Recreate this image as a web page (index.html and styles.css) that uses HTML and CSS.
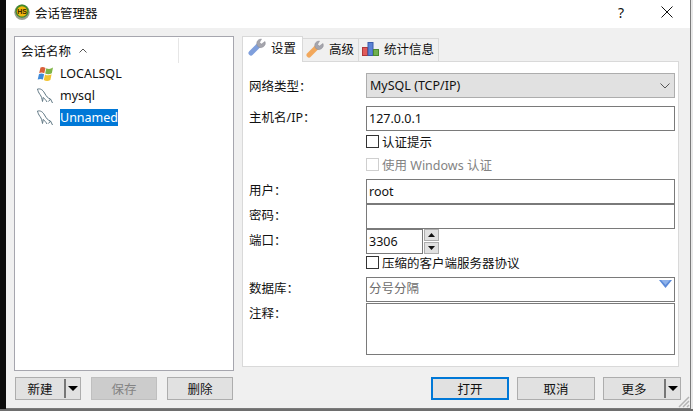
FILE: index.html
```html
<!DOCTYPE html>
<html lang="zh">
<head>
<meta charset="utf-8">
<title>会话管理器</title>
<link rel="stylesheet" href="styles.css">
</head>
<body>
<div class="screen">
  <div class="edge-left"></div>
  <div class="window">
    <header class="titlebar">
      <svg class="logo" width="16" height="16" viewBox="0 0 16 16">
        <circle cx="8" cy="8.200" r="7.700" fill="#9a9f8e"/>
        <circle cx="8" cy="7.200" r="6.600" fill="#3f8a2c"/>
        <circle cx="8" cy="7.400" r="5.200" fill="#f4b70c"/>
        <text x="8" y="10" class="logo-text">HS</text>
      </svg>
      <span class="title">会话管理器</span>
      <span class="help">?</span>
      <svg class="close" width="12" height="12" viewBox="0 0 12 12"><path d="M.5.5l11 11M11.500.5l-11 11" stroke="#111" fill="none"/></svg>
    </header>
    <div class="main">
      <section class="sessions">
        <div class="list">
          <div class="list-head">
            <span class="head-label">会话名称</span>
            <svg class="sort" width="8" height="5" viewBox="0 0 8 5"><path d="M.5 4.500L4 1l3.500 3.500" stroke="#555" fill="none"/></svg>
          </div>
          <div class="item">
            <svg class="item-icon" width="16" height="16" viewBox="0 0 16 16">
              <path d="M3.500 1.500Q6 .5 8.500 2L7.300 7.300Q5 6 2.200 7z" fill="#d9603a"/>
              <path d="M9.300 2.200Q12.500 4 16 1.500L14.800 7.300Q11.500 9.200 8.200 7.500z" fill="#7eb545"/>
              <path d="M2 7.900Q4.800 6.800 7.100 8.200L5.900 13.600Q3.500 12.300 .7 13.600z" fill="#3f8ad8"/>
              <path d="M8 8.400Q11.300 10.200 14.600 8.200L13.400 14Q10 15.900 6.800 14z" fill="#f2c432"/>
            </svg>
            <span class="item-name">LOCALSQL</span>
          </div>
          <div class="item">
            <svg class="item-icon" width="16" height="16" viewBox="0 0 16 16"><path d="M.5 1C3.500.5 5.500 1.500 7.500 5S10.500 10 13.500 11L15.500 15M13.500 11L11.500 13.500M.5 1C1 3 1.500 4.500 3 6.500S4.800 10 5.500 13.500C6 11.500 6 10.500 6 9.500 7.500 10.500 9 12 10 14" stroke="#5f7783" stroke-width="1" fill="none"/></svg>
            <span class="item-name">mysql</span>
          </div>
          <div class="item">
            <svg class="item-icon" width="16" height="16" viewBox="0 0 16 16"><path d="M.5 1C3.500.5 5.500 1.500 7.500 5S10.500 10 13.500 11L15.500 15M13.500 11L11.500 13.500M.5 1C1 3 1.500 4.500 3 6.500S4.800 10 5.500 13.500C6 11.500 6 10.500 6 9.500 7.500 10.500 9 12 10 14" stroke="#5f7783" stroke-width="1" fill="none"/></svg>
            <span class="item-name selected">Unnamed</span>
          </div>
        </div>
      </section>
      <section class="details">
        <nav class="tabs">
          <div class="tab active">
            <svg class="tab-icon" width="18" height="18" viewBox="0 0 18 18"><path d="M3 15L10 8" stroke="#7f9fdc" stroke-width="5" stroke-linecap="round"/><path d="M10.500 9A4.500 4.500 0 0 1 11 1.500L13.500 1 11.500 4.500l2 1.500L17 3.500A4.500 4.500 0 0 1 10.500 9z" fill="#a5a5ad" stroke="#8b8b93" stroke-width=".5"/></svg>
            <span>设置</span>
          </div>
          <div class="tab adv">
            <svg class="tab-icon" width="18" height="18" viewBox="0 0 18 18"><path d="M3 15L10 8" stroke="#f2a85c" stroke-width="5" stroke-linecap="round"/><path d="M10.500 9A4.500 4.500 0 0 1 11 1.500L13.500 1 11.500 4.500l2 1.500L17 3.500A4.500 4.500 0 0 1 10.500 9z" fill="#a5a5ad" stroke="#8b8b93" stroke-width=".5"/></svg>
            <span>高级</span>
          </div>
          <div class="tab stats">
            <svg class="tab-icon" width="17" height="16" viewBox="0 0 17 16"><rect x=".5" y="6.500" width="5" height="8" fill="#e05a5a" stroke="#b03838"/><rect x="6" y="1.500" width="5" height="13" fill="#5b82d6" stroke="#3a5cab"/><rect x="11.500" y="8.500" width="5" height="6" fill="#6fb04f" stroke="#4b8a30"/></svg>
            <span>统计信息</span>
          </div>
        </nav>
        <div class="panel">
          <div class="row row-combo">
            <label class="field-label">网络类型：</label>
            <div class="combo">
              <span>MySQL (TCP/IP)</span>
              <svg width="10" height="6" viewBox="0 0 10 6"><path d="M.5.500L5 5 9.500.500" stroke="#555" fill="none"/></svg>
            </div>
          </div>
          <div class="row row-host">
            <label class="field-label">主机名/IP：</label>
            <div class="input">127.0.0.1</div>
          </div>
          <div class="row row-check1">
            <span class="spacer"></span>
            <span class="box"></span><span class="check-text">认证提示</span>
          </div>
          <div class="row row-check2 disabled">
            <span class="spacer"></span>
            <span class="box"></span><span class="check-text">使用 Windows 认证</span>
          </div>
          <div class="row row-user">
            <label class="field-label">用户：</label>
            <div class="input">root</div>
          </div>
          <div class="row row-pass">
            <label class="field-label">密码：</label>
            <div class="input"></div>
          </div>
          <div class="row row-port">
            <label class="field-label">端口：</label>
            <div class="input port">3306</div>
            <div class="spin">
              <span class="spin-btn"><svg width="7" height="4" viewBox="0 0 7 4"><path d="M3.500 0L7 4H0z" fill="#111"/></svg></span>
              <span class="spin-btn"><svg width="7" height="4" viewBox="0 0 7 4"><path d="M0 0H7L3.500 4z" fill="#111"/></svg></span>
            </div>
          </div>
          <div class="row row-check3">
            <span class="spacer"></span>
            <span class="box"></span><span class="check-text">压缩的客户端服务器协议</span>
          </div>
          <div class="row row-db">
            <label class="field-label">数据库：</label>
            <div class="input db">
              <span class="placeholder">分号分隔</span>
              <svg width="13" height="8" viewBox="0 0 13 8"><path d="M0 0H13L6.500 8z" fill="#5b8ad8"/><path d="M2 0H11L6.500 5z" fill="#8fb2ea"/></svg>
            </div>
          </div>
          <div class="row row-notes">
            <label class="field-label">注释：</label>
            <div class="input notes"></div>
          </div>
        </div>
      </section>
    </div>
    <footer class="footer">
      <div class="btn-group left">
        <div class="btn split"><span class="split-label">新建</span><span class="split-arrow"></span></div>
        <div class="btn off">保存</div>
        <div class="btn">删除</div>
      </div>
      <div class="btn-group right">
        <div class="btn wide primary">打开</div>
        <div class="btn wide">取消</div>
        <div class="btn wide split"><span class="split-label">更多</span><span class="split-arrow"></span></div>
      </div>
      <svg class="grip" width="12" height="12" viewBox="0 0 12 12"><path d="M11 1L1 11M11 5L5 11M11 9L9 11" stroke="#b4b4b4" stroke-width="1.500"/></svg>
    </footer>
  </div>
  <div class="edge-right"></div>
</div>
</body>
</html>
```
FILE: styles.css
```css
* { box-sizing: border-box; }
html, body { margin: 0; padding: 0; }
body {
  width: 693px;
  height: 411px;
  overflow: hidden;
  font-family: "Noto Sans", "Noto Sans CJK SC", sans-serif;
  font-size: 12px;
  color: #111;
  background: #6e6e6e;
}
.screen { display: flex; height: 409px; }
.edge-left { width: 6px; background: #0c0c0c; flex: none; }
.edge-right { flex: 1; background: #e8e8e8; }
.window {
  position: relative;
  width: 685px;
  flex: none;
  display: flex;
  flex-direction: column;
  background: #f0f0f0;
  border-right: 1px solid #7a7a7a;
  border-bottom: 1px solid #7a7a7a;
}

.titlebar { height: 28px; flex: none; background: #fff; display: flex; align-items: center; padding: 0 0 4px 8px; }
.logo { flex: none; }
.logo-text { font: bold 7px "Liberation Sans", sans-serif; fill: #3a2a00; text-anchor: middle; }
.title { margin-left: 5px; font-size: 12.500px; }
.help { margin-left: auto; font-size: 14px; margin-right: 37px; }
.close { margin-right: 17px; }

.main { flex: none; height: 340px; display: flex; padding: 8px 0 0 8px; }
.sessions { width: 220px; flex: none; height: 335px; margin-right: 8px; margin-left: 0; }
.list { height: 100%; background: #fff; border: 1px solid #a6a6ae; padding-top: 1px; }
.list-head { position: relative; height: 25px; display: flex; align-items: center; padding-left: 6px; width: 164px; border-right: 1px solid #e6e6e6; margin-bottom: 0; }
.head-label { font-size: 12.500px; }
.sort { margin-left: 8px; }
.item { height: 22px; display: flex; align-items: center; padding-left: 22px; }
.item-icon { flex: none; margin-right: 7px; }
.item-name { font-size: 12.500px; line-height: 17px; padding: 0; margin-bottom: 2px; }
.selected { background: #0078d7; color: #fff; }

.details { width: 437px; flex: none; display: flex; flex-direction: column; }
.tabs { display: flex; height: 25px; align-items: flex-end; flex: none; position: relative; z-index: 1; padding-left: 0; }
.tab { display: flex; align-items: center; gap: 5px; height: 23px; border: 1px solid #d9d9d9; border-bottom: 0; background: #f0f0f0; padding: 0 0 3px 3px; font-size: 12.500px; }
.tab.active { height: 26px; width: 61px; background: #fff; margin-bottom: -1px; padding: 0 0 5px 5px; position: relative; }
.tab.adv { width: 56px; border-left: 0; }
.tab.stats { width: 80px; border-left: 0; }
.tab-icon { flex: none; }

.panel { height: 306px; width: 437px; background: #fff; border: 1px solid #d9d9d9; padding: 11px 3px 0 6px; display: flex; flex-direction: column; }
.row { display: flex; flex: none; align-items: center; font-size: 12.500px; }
.field-label { width: 117px; flex: none; padding-bottom: 4px; }
.row-combo .field-label { padding-bottom: 0; }
.spacer { width: 117px; flex: none; }
.row-combo { height: 25px; margin-bottom: 8px; }
.row-host { height: 25px; margin-bottom: 3px; }
.row-check1 { height: 15px; margin-bottom: 8px; }
.row-check2 { height: 15px; margin-bottom: 7px; }
.row-user, .row-pass, .row-port { height: 25px; }
.row-check3 { height: 15px; margin-top: 1px; margin-bottom: 7px; }
.row-db { height: 25px; margin-bottom: 1px; }
.row-notes { height: 52px; align-items: flex-start; }
.row-notes .field-label { padding: 0; line-height: 22px; }

.combo { flex: 1; height: 100%; background: #e1e1e1; border: 1px solid #adadad; display: flex; align-items: center; justify-content: space-between; padding: 0 4px 0 3px; }
.input { flex: 1; height: 100%; background: #fff; border: 1px solid #7a7a7a; display: flex; align-items: center; padding: 0 0 1px 2px; }
.input.port { flex: none; width: 57px; }
.input.db { justify-content: space-between; padding: 0 2px 0 2px; align-items: flex-start; }
.db svg { margin-top: 2px; }
.placeholder { color: #6d6d6d; }
.spin { margin-left: 1px; display: flex; flex-direction: column; gap: 1px; }
.spin-btn { width: 15px; height: 12px; background: #e1e1e1; border: 1px solid #adadad; display: flex; align-items: center; justify-content: center; }
.box { width: 13px; height: 13px; border: 1px solid #333; background: #fff; flex: none; }
.check-text { margin-left: 3px; }
.disabled { color: #838383; }
.disabled .box { border-color: #cfcfcf; }

.footer { flex: 1; display: flex; justify-content: space-between; padding: 9px 9px 0 9px; position: relative; }
.btn-group { display: flex; }
.btn-group.left { gap: 10px; }
.btn-group.right { gap: 8px; }
.btn { width: 66px; height: 23px; background: #e1e1e1; border: 1px solid #adadad; display: flex; align-items: center; justify-content: center; font-size: 12.500px; }
.btn.wide { width: 78px; }
.btn.off { background: #ccc; border-color: #bfbfbf; color: #838383; }
.btn.primary { border: 2px solid #0078d7; }
.btn.split { justify-content: flex-start; padding: 0; }
.split-label { flex: 1; text-align: center; }
.split-arrow { width: 16px; height: 19px; border-left: 2px solid #777; display: flex; align-items: center; justify-content: center; }
.split-arrow::after { content: ""; border-left: 5px solid transparent; border-right: 5px solid transparent; border-top: 5px solid #000; }
.grip { position: absolute; right: 0; bottom: 0; }
```
